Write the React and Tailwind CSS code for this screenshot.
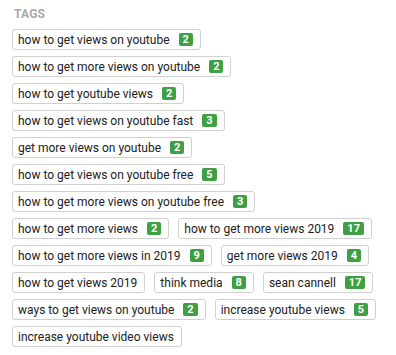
import React from 'react';

const tags = [
    [['how to get views on youtube', 2]],
    [['how to get more views on youtube', 2]],
    [['how to get youtube views', 2]],
    [['how to get views on youtube fast', 3]],
    [['get more views on youtube', 2]],
    [['how to get views on youtube free', 5]],
    [['how to get more views on youtube free', 3]],
    [['how to get more views', 2], ['how to get more views 2019', 17]],
    [['how to get more views in 2019', 9], ['get more views 2019', 4]],
    [['how to get views 2019', null], ['think media', 8], ['sean cannell', 17]],
    [['ways to get views on youtube', 2], ['increase youtube views', 5]],
    [['increase youtube video views', null]],
];

const Tag = ({ label, count }) => (
    <div className="flex items-center h-[21px] pl-[5px] pr-[7px] border border-[#d0d0d0] rounded-[3px] bg-white whitespace-nowrap">
        <span className="text-[12px] leading-none text-[#212121]">{label}</span>
        {count !== null && (
            <span className="ml-[9px] h-[13px] px-[4px] flex items-center rounded-[2px] bg-[#3ea043] text-white text-[11px] font-bold leading-none">
                {count}
            </span>
        )}
    </div>
);

export default function App() {
    return (
        <div className="w-[396px] h-[355px] bg-white pl-[12px] pt-[8px]" style={{ fontFamily: 'Roboto, "Liberation Sans", sans-serif' }}>
            <div className="text-[12px] font-bold text-[#aaaaaa] tracking-[0.2px] leading-none pl-[2px] mb-[9px]">TAGS</div>
            <div className="flex flex-col gap-[6px]">
                {tags.map((row, i) => (
                    <div key={i} className="flex gap-[9px]">
                        {row.map(([label, count]) => (
                            <Tag key={label} label={label} count={count} />
                        ))}
                    </div>
                ))}
            </div>
        </div>
    );
}
